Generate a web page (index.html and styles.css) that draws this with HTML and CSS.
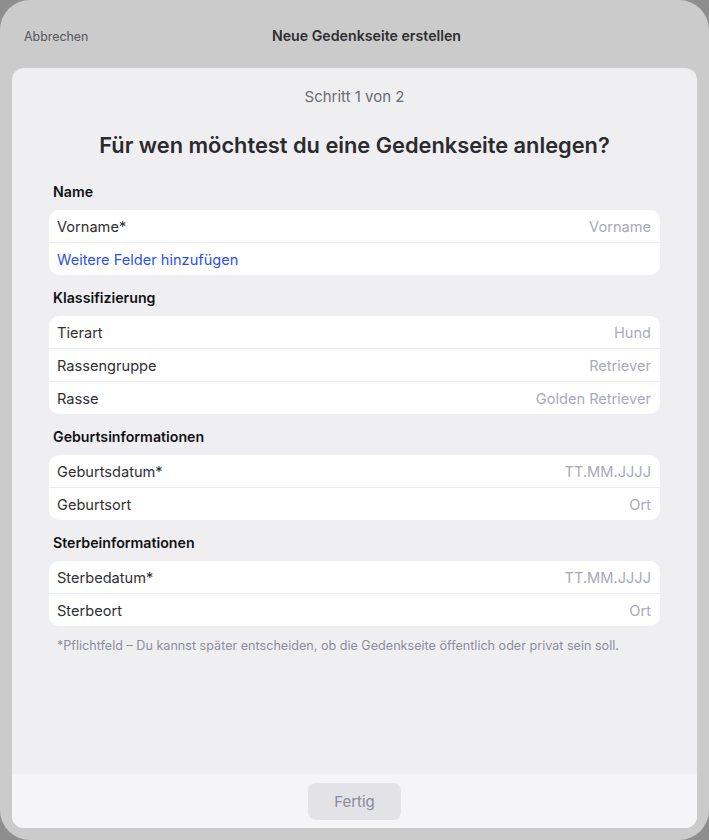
FILE: index.html
```html
<!DOCTYPE html>
<html lang="de">
<head>
<meta charset="utf-8">
<title>Neue Gedenkseite erstellen</title>
<link rel="stylesheet" href="styles.css">
</head>
<body>
<div class="device">
  <header class="topbar">
    <span class="cancel">Abbrechen</span>
    <span class="bartitle">Neue Gedenkseite erstellen</span>
    <span></span>
  </header>
  <main class="sheet">
    <div class="content">
      <p class="step">Schritt 1 von 2</p>
      <h1 class="title">Für wen möchtest du eine Gedenkseite anlegen?</h1>

      <h2 class="section">Name</h2>
      <div class="card">
        <div class="row"><span class="label">Vorname*</span><span class="ph">Vorname</span></div>
        <div class="row"><span class="link">Weitere Felder hinzufügen</span></div>
      </div>

      <h2 class="section">Klassifizierung</h2>
      <div class="card">
        <div class="row"><span class="label">Tierart</span><span class="ph">Hund</span></div>
        <div class="row"><span class="label">Rassengruppe</span><span class="ph">Retriever</span></div>
        <div class="row"><span class="label">Rasse</span><span class="ph">Golden Retriever</span></div>
      </div>

      <h2 class="section">Geburtsinformationen</h2>
      <div class="card">
        <div class="row"><span class="label">Geburtsdatum*</span><span class="ph">TT.MM.JJJJ</span></div>
        <div class="row"><span class="label">Geburtsort</span><span class="ph">Ort</span></div>
      </div>

      <h2 class="section">Sterbeinformationen</h2>
      <div class="card">
        <div class="row"><span class="label">Sterbedatum*</span><span class="ph">TT.MM.JJJJ</span></div>
        <div class="row"><span class="label">Sterbeort</span><span class="ph">Ort</span></div>
      </div>

      <p class="note">*Pflichtfeld – Du kannst später entscheiden, ob die Gedenkseite öffentlich oder privat sein soll.</p>
    </div>
    <footer class="footer">
      <button class="done" type="button">Fertig</button>
    </footer>
  </main>
</div>
</body>
</html>
```
FILE: styles.css
```css
* { box-sizing: border-box; }
html, body { margin: 0; padding: 0; }
body {
  background: #8e8e8e;
  font-family: Inter, "Noto Sans", sans-serif;
  width: 709px;
  height: 840px;
  overflow: hidden;
}
.device {
  height: 840px;
  background: #cbcbcb;
  border-radius: 30px;
  display: flex;
  flex-direction: column;
}
.topbar {
  height: 68px;
  display: grid;
  grid-template-columns: 1fr auto 1fr;
  align-items: center;
  padding: 4px 24px 0 24px;
}
.cancel {
  font-size: 12.4px;
  color: #55555c;
  line-height: 16px;
  padding-top: 2px;
}
.bartitle {
  font-size: 14.2px;
  font-weight: 600;
  color: #2e2e31;
  line-height: 16px;
  padding-left: 24px;
}
.sheet {
  flex: 1;
  margin: 0 12px 12px;
  background: #efeff2;
  border-radius: 12px;
  display: flex;
  flex-direction: column;
  overflow: hidden;
}
.content {
  flex: 1;
  padding: 0 37px;
}
.step {
  margin: 20px 0 0;
  text-align: center;
  font-size: 15px;
  line-height: 18px;
  color: #6b6b76;
}
.title {
  margin: 25px 0 0;
  text-align: center;
  font-size: 21.8px;
  line-height: 28px;
  font-weight: 600;
  color: #2b2b2e;
}
.section {
  margin: 14px 0 9px 4px;
  font-size: 14.2px;
  line-height: 18px;
  font-weight: 600;
  color: #111114;
}
.title + .section { margin-top: 24px; }
.card {
  background: #ffffff;
  border-radius: 10px;
  overflow: hidden;
}
.row {
  height: 32px;
  display: flex;
  align-items: center;
  justify-content: space-between;
  padding: 2px 9px 0 8px;
  font-size: 14.6px;
}
.row + .row {
  height: 33px;
  border-top: 1px solid #ececf0;
}
.label { color: #2f2f33; }
.ph { color: #a9a9bd; }
.link { color: #2d50ef; }
.note {
  margin: 12px 0 0 8px;
  font-size: 12.6px;
  line-height: 16px;
  color: #8d8d9c;
}
.footer {
  height: 54px;
  background: #f5f5f7;
  display: flex;
  justify-content: center;
  align-items: center;
}
.done {
  width: 93px;
  height: 37px;
  border: none;
  border-radius: 8px;
  background: #e2e2e7;
  font-family: Inter, "Noto Sans", sans-serif;
  font-size: 15px;
  color: #8b8b9b;
  margin-top: 1px;
}
```
